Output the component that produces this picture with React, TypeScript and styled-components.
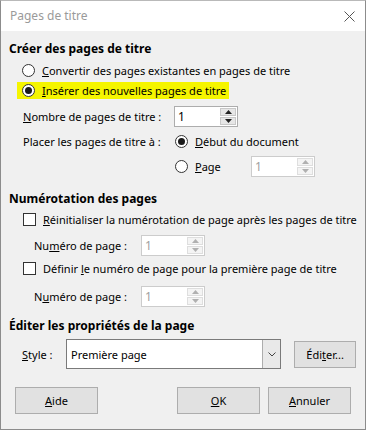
import styled, { createGlobalStyle } from 'styled-components';

const GlobalStyle = createGlobalStyle`
  html, body {
    margin: 0;
    padding: 0;
    background: #f0f0f0;
  }
  body {
    font-family: "Noto Sans", "Open Sans", sans-serif;
    font-size: 11px;
    color: #000;
  }
`;

const Window = styled.div`
  width: 366px;
  height: 430px;
  box-sizing: border-box;
  border: 1px solid #8c8c8c;
  border-top-color: #b9b9b9;
  background: #f0f0f0;
  display: flex;
  flex-direction: column;
`;

const TitleBar = styled.div`
  height: 30px;
  background: #fff;
  display: flex;
  align-items: center;
  justify-content: space-between;
  padding: 0 10px 0 9px;
`;

const Title = styled.span`
  color: #9a9a9a;
  font-size: 12px;
  padding-bottom: 1px;
`;

const Body = styled.div`
  padding: 7px 9px 0 8px;
  display: flex;
  flex-direction: column;
`;

const Heading = styled.div<{ $top?: number }>`
  height: 20px;
  margin-top: ${(p) => p.$top ?? 0}px;
  display: flex;
  align-items: center;
  font-weight: 700;
  font-size: 12px;
`;

const Row = styled.div<{ $top?: number; $h?: number; $indent?: number }>`
  height: ${(p) => p.$h ?? 20}px;
  margin-top: ${(p) => p.$top ?? 0}px;
  padding-left: ${(p) => p.$indent ?? 13}px;
  display: flex;
  align-items: center;
`;

const Highlight = styled.span`
  display: inline-flex;
  align-items: center;
  height: 17px;
  padding: 0 3px 0 5px;
  margin-left: -5px;
  background: #f5f500;
`;

const Label = styled.span<{ $w?: number }>`
  display: inline-block;
  width: ${(p) => (p.$w ? `${p.$w}px` : 'auto')};
  flex-shrink: 0;
  white-space: nowrap;
`;

const Option = styled.label<{ $w?: number }>`
  display: inline-flex;
  align-items: center;
  gap: 7px;
  width: ${(p) => (p.$w ? `${p.$w}px` : 'auto')};
  white-space: nowrap;
`;

const RadioDot = styled.span<{ $on?: boolean }>`
  width: 11px;
  height: 11px;
  border-radius: 50%;
  border: 1px solid #333;
  background: #fff;
  flex-shrink: 0;
  display: flex;
  align-items: center;
  justify-content: center;
  &::after {
    content: '';
    width: 7px;
    height: 7px;
    border-radius: 50%;
    background: ${(p) => (p.$on ? '#1a1a1a' : 'transparent')};
  }
`;

const Box = styled.span`
  width: 11px;
  height: 11px;
  border: 1px solid #333;
  background: #fff;
  flex-shrink: 0;
`;

const Spin = styled.div<{ $off?: boolean }>`
  width: 64px;
  height: 21px;
  box-sizing: border-box;
  border: 1px solid ${(p) => (p.$off ? '#cccccc' : '#adadad')};
  background: #fff;
  display: flex;
  color: ${(p) => (p.$off ? '#a0a0a0' : '#000')};
  font-size: 12px;
`;

const SpinValue = styled.span`
  flex: 1;
  padding-left: 3px;
  display: flex;
  align-items: center;
`;

const SpinButtons = styled.div<{ $off?: boolean }>`
  width: 16px;
  display: flex;
  flex-direction: column;
  gap: 1px;
  padding: 1px 1px 1px 0;
  & > span {
    flex: 1;
    display: flex;
    align-items: center;
    justify-content: center;
    background: ${(p) => (p.$off ? '#f4f4f4' : '#e6e6e6')};
    border: 1px solid ${(p) => (p.$off ? '#dedede' : '#c8c8c8')};
  }
  svg {
    fill: ${(p) => (p.$off ? '#b0b0b0' : '#222')};
  }
`;

const Combo = styled.div`
  width: 216px;
  height: 30px;
  box-sizing: border-box;
  border: 1px solid #7a7a7a;
  background: #fff;
  display: flex;
  margin-right: 13px;
`;

const ComboText = styled.span`
  flex: 1;
  padding-left: 4px;
  display: flex;
  align-items: center;
`;

const ComboArrow = styled.span`
  width: 17px;
  border-left: 1px solid #adadad;
  background: #e9e9e9;
  display: flex;
  align-items: center;
  justify-content: center;
`;

const Button = styled.button<{ $w?: number; $h?: number }>`
  width: ${(p) => p.$w ?? 83}px;
  height: ${(p) => p.$h ?? 27}px;
  box-sizing: border-box;
  border: 1px solid #adadad;
  background: #e1e1e1;
  font: inherit;
  color: #000;
  padding: 0;
`;

const Footer = styled.div`
  margin-top: 18px;
  padding: 0 14px;
  display: flex;
  justify-content: space-between;
`;

const ButtonGroup = styled.div`
  display: flex;
  gap: 8px;
`;

const Spinner = ({ value, off }: { value: string; off?: boolean }) => (
  <Spin $off={off}>
    <SpinValue>{value}</SpinValue>
    <SpinButtons $off={off}>
      <span>
        <svg width="7" height="4" viewBox="0 0 7 4"><path d="M3.5 0L7 4H0z" /></svg>
      </span>
      <span>
        <svg width="7" height="4" viewBox="0 0 7 4"><path d="M0 0h7L3.5 4z" /></svg>
      </span>
    </SpinButtons>
  </Spin>
);

export default function App() {
  return (
    <>
      <GlobalStyle />
      <Window>
        <TitleBar>
          <Title>Pages de titre</Title>
          <svg width="11" height="11" viewBox="0 0 11 11">
            <path d="M0.5 0.5L10.5 10.5M10.5 0.5L0.5 10.5" stroke="#555" strokeWidth="1" />
          </svg>
        </TitleBar>
        <Body>
          <Heading>Créer des pages de titre</Heading>
          <Row $top={2}>
            <Option>
              <RadioDot />
              <span><u>C</u>onvertir des pages existantes en pages de titre</span>
            </Option>
          </Row>
          <Row>
            <Highlight>
              <Option>
                <RadioDot $on />
                <span><u>I</u>nsérer des nouvelles pages de titre</span>
              </Option>
            </Highlight>
          </Row>
          <Row $top={5} $h={22} $indent={14}>
            <Label $w={151}><u>N</u>ombre de pages de titre :</Label>
            <Spinner value="1" />
          </Row>
          <Row $top={4} $indent={14}>
            <Label $w={152}>Placer les pages de titre à :</Label>
            <Option>
              <RadioDot $on />
              <span><u>D</u>ébut du document</span>
            </Option>
          </Row>
          <Row $top={4} $h={22} $indent={166}>
            <Option $w={76}>
              <RadioDot />
              <span><u>P</u>age</span>
            </Option>
            <Spinner value="1" off />
          </Row>

          <Heading $top={11}>Numérotation des pages</Heading>
          <Row $top={1} $indent={14}>
            <Option>
              <Box />
              <span><u>R</u>éinitialiser la numérotation de page après les pages de titre</span>
            </Option>
          </Row>
          <Row $top={5} $h={22} $indent={25}>
            <Label $w={107}>Nu<u>m</u>éro de page :</Label>
            <Spinner value="1" off />
          </Row>
          <Row $top={2} $indent={14}>
            <Option>
              <Box />
              <span>Définir <u>l</u>e numéro de page pour la première page de titre</span>
            </Option>
          </Row>
          <Row $top={7} $h={22} $indent={25}>
            <Label $w={107}>N<u>u</u>méro de page :</Label>
            <Spinner value="1" off />
          </Row>

          <Heading $top={8}>Éditer les propriétés de la page</Heading>
          <Row $top={4} $h={30} $indent={13}>
            <Label $w={44}><u>S</u>tyle :</Label>
            <Combo>
              <ComboText>Première page</ComboText>
              <ComboArrow>
                <svg width="8" height="5" viewBox="0 0 8 5">
                  <path d="M0.5 0.5L4 4L7.5 0.5" stroke="#444" fill="none" />
                </svg>
              </ComboArrow>
            </Combo>
            <Button $w={62} $h={27}>Édi<u>t</u>er...</Button>
          </Row>
        </Body>
        <Footer>
          <Button><u>A</u>ide</Button>
          <ButtonGroup>
            <Button><u>O</u>K</Button>
            <Button><u>A</u>nnuler</Button>
          </ButtonGroup>
        </Footer>
      </Window>
    </>
  );
}
